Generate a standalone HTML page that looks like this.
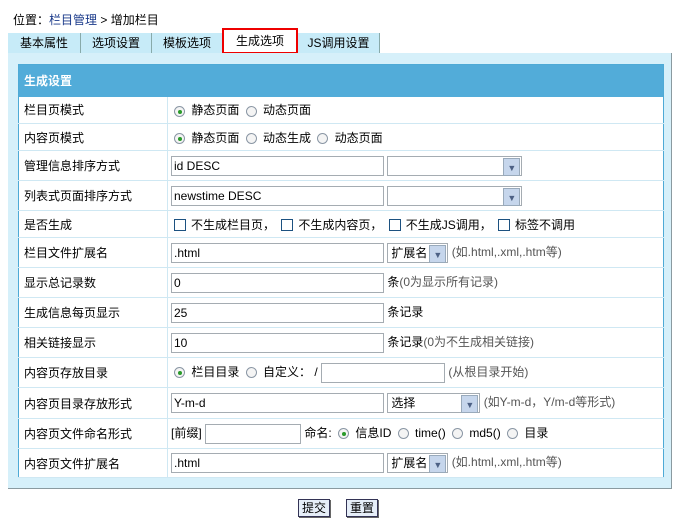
<!DOCTYPE html>
<html><head><meta charset="utf-8"><style>
*{box-sizing:border-box;margin:0;padding:0}
body{width:679px;height:526px;background:#fff;font-family:"Liberation Sans","Noto Sans CJK SC",sans-serif;font-size:12px;color:#000;position:relative;overflow:hidden}
.pos{position:absolute;left:13px;top:11px;font-size:12px}
.pos a{color:#1a3a8a}
.tabs{position:absolute;left:8px;top:33px;height:20px;width:372px;background:#c7ebf8}
.tab{position:absolute;top:0;height:20px;line-height:20px;font-size:12px;text-align:center;border-right:1px solid #8aa;}
.tab.sel{background:#fff;border:2px solid #e00;top:-5px;height:26px;line-height:22px}
.panel{position:absolute;left:8px;top:53px;width:664px;height:436px;background:#d6f0fa;border-right:1px solid #8a9aa0;border-bottom:1px solid #8a9aa0}
table{position:absolute;left:10px;top:11px;width:646px;border-collapse:collapse;background:#fff;border:1px solid #4eaad6}
td{border-bottom:1px solid #cfe8f3;padding:0 0 0 3px;white-space:nowrap;vertical-align:middle}
td.l{width:149px;border-right:1px solid #cfe8f3;padding-left:5px}
th{background:#52acd9;color:#fff;text-align:left;height:32px;padding-left:5px;font-size:12px}
.in{display:inline-block;vertical-align:middle;height:20px;border:1px solid #a5acb2;background:#fff;line-height:18px;padding-left:2px}
.sel2{display:inline-block;vertical-align:middle;height:20px;border:1px solid #a5acb2;background:#fff;line-height:18px;padding-left:3px;position:relative}
.sel2:after{content:"";position:absolute;right:1px;top:1px;width:15px;height:16px;background:#c6d6ec;border:1px solid #9ab}
.sel2 b{position:absolute;right:5px;top:2px;font-size:9px;color:#4d6185;z-index:2;font-weight:bold}
.r{display:inline-block;width:11px;height:11px;border:1px solid #8a96a4;border-radius:50%;vertical-align:middle;margin:0 3px 0 3px;position:relative;background:#f4f4f4}
.r.on:after{content:"";position:absolute;left:3px;top:3px;width:4px;height:4px;border-radius:50%;background:#2a9a2a}
.c{display:inline-block;width:12px;height:12px;border:1px solid #1c5180;vertical-align:middle;margin:0 5px 0 3px;background:#fff}
.h{color:#555}
.btn{position:absolute;top:499px;height:18px;border:1px solid #335;background:#e6eef8;font-size:12px;line-height:16px;padding:0 3px;box-shadow:1px 1px 0 #666}
</style></head><body>
<div class="pos">位置：<a>栏目管理</a> &gt; 增加栏目</div>
<div class="tabs">
<div class="tab" style="left:0;width:73px">基本属性</div>
<div class="tab" style="left:73px;width:71px">选项设置</div>
<div class="tab" style="left:144px;width:70px;border-right:none">模板选项</div>
<div class="tab sel" style="left:214px;width:76px">生成选项</div>
<div class="tab" style="left:290px;width:82px">JS调用设置</div>
</div>
<div class="panel">
<table>
<tr><th colspan="2">生成设置</th></tr>
<tr style="height:27px"><td class="l">栏目页模式</td><td><span class="r on"></span> 静态页面 <span class="r"></span> 动态页面</td></tr>
<tr style="height:27px"><td class="l">内容页模式</td><td><span class="r on"></span> 静态页面 <span class="r"></span> 动态生成 <span class="r"></span> 动态页面</td></tr>
<tr style="height:30px"><td class="l">管理信息排序方式</td><td><span class="in" style="width:213px">id DESC</span> <span class="sel2" style="width:135px"><b>▼</b></span></td></tr>
<tr style="height:30px"><td class="l">列表式页面排序方式</td><td><span class="in" style="width:213px">newstime DESC</span> <span class="sel2" style="width:135px"><b>▼</b></span></td></tr>
<tr style="height:27px"><td class="l">是否生成</td><td><span class="c"></span>不生成栏目页， <span class="c"></span>不生成内容页， <span class="c"></span>不生成JS调用， <span class="c"></span>标签不调用</td></tr>
<tr style="height:30px"><td class="l">栏目文件扩展名</td><td><span class="in" style="width:213px">.html</span> <span class="sel2" style="width:61px">扩展名<b>▼</b></span> <span class="h">(如.html,.xml,.htm等)</span></td></tr>
<tr style="height:30px"><td class="l">显示总记录数</td><td><span class="in" style="width:213px">0</span> 条<span class="h">(0为显示所有记录)</span></td></tr>
<tr style="height:30px"><td class="l">生成信息每页显示</td><td><span class="in" style="width:213px">25</span> 条记录</td></tr>
<tr style="height:30px"><td class="l">相关链接显示</td><td><span class="in" style="width:213px">10</span> 条记录<span class="h">(0为不生成相关链接)</span></td></tr>
<tr style="height:30px"><td class="l">内容页存放目录</td><td><span class="r on"></span> 栏目目录 <span class="r"></span> 自定义： / <span class="in" style="width:124px"></span> <span class="h">(从根目录开始)</span></td></tr>
<tr style="height:31px"><td class="l">内容页目录存放形式</td><td><span class="in" style="width:213px">Y-m-d</span> <span class="sel2" style="width:93px">选择<b>▼</b></span> <span class="h">(如Y-m-d，Y/m-d等形式)</span></td></tr>
<tr style="height:30px"><td class="l">内容页文件命名形式</td><td>[前缀] <span class="in" style="width:96px"></span> 命名: <span class="r on"></span> 信息ID <span class="r"></span> time() <span class="r"></span> md5() <span class="r"></span> 目录</td></tr>
<tr style="height:29px"><td class="l">内容页文件扩展名</td><td><span class="in" style="width:213px">.html</span> <span class="sel2" style="width:61px">扩展名<b>▼</b></span> <span class="h">(如.html,.xml,.htm等)</span></td></tr>
</table>
</div>
<div class="btn" style="left:298px">提交</div>
<div class="btn" style="left:346px">重置</div>
</body></html>
